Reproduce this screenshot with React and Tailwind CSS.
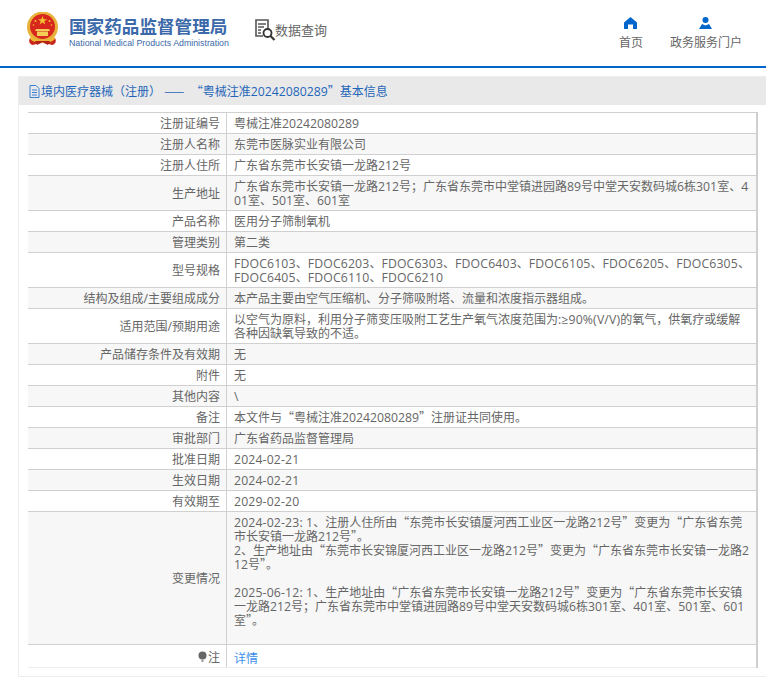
const cjk = { fontFamily: '"Noto Sans CJK SC", sans-serif' };

const rows = [
  { label: '注册证编号', value: ['粤械注准20242080289'] },
  { label: '注册人名称', value: ['东莞市医脉实业有限公司'] },
  { label: '注册人住所', value: ['广东省东莞市长安镇一龙路212号'] },
  { label: '生产地址', value: ['广东省东莞市长安镇一龙路212号；广东省东莞市中堂镇进园路89号中堂天安数码城6栋301室、4', '01室、501室、601室'] },
  { label: '产品名称', value: ['医用分子筛制氧机'] },
  { label: '管理类别', value: ['第二类'] },
  { label: '型号规格', value: ['FDOC6103、FDOC6203、FDOC6303、FDOC6403、FDOC6105、FDOC6205、FDOC6305、', 'FDOC6405、FDOC6110、FDOC6210'] },
  { label: '结构及组成/主要组成成分', value: ['本产品主要由空气压缩机、分子筛吸附塔、流量和浓度指示器组成。'] },
  { label: '适用范围/预期用途', value: ['以空气为原料，利用分子筛变压吸附工艺生产氧气浓度范围为:≥90%(V/V)的氧气，供氧疗或缓解', '各种因缺氧导致的不适。'] },
  { label: '产品储存条件及有效期', value: ['无'] },
  { label: '附件', value: ['无'] },
  { label: '其他内容', value: ['\\'] },
  { label: '备注', value: ['本文件与“粤械注准20242080289”注册证共同使用。'] },
  { label: '审批部门', value: ['广东省药品监督管理局'] },
  { label: '批准日期', value: ['2024-02-21'] },
  { label: '生效日期', value: ['2024-02-21'] },
  { label: '有效期至', value: ['2029-02-20'] },
  {
    label: '变更情况',
    value: [
      '2024-02-23: 1、注册人住所由“东莞市长安镇厦河西工业区一龙路212号”变更为“广东省东莞',
      '市长安镇一龙路212号”。',
      '2、生产地址由“东莞市长安锦厦河西工业区一龙路212号”变更为“广东省东莞市长安镇一龙路2',
      '12号”。',
      '\u00a0',
      '2025-06-12: 1、生产地址由“广东省东莞市长安镇一龙路212号”变更为“广东省东莞市长安镇',
      '一龙路212号；广东省东莞市中堂镇进园路89号中堂天安数码城6栋301室、401室、501室、601',
      '室”。',
      '\u00a0',
    ],
  },
];

// latin runs are set a little wider than the cjk around them
function Mixed({ text }) {
  return text.split(/([\x20-\x7e≥]+)/).map((part, i) => {
    if (i % 2 === 0) return part;
    const wide = /[A-Z-]/.test(part);
    return (
      <span key={i} className={`font-['Open_Sans'] text-[12.250px] leading-[0px] ${wide ? 'tracking-[0.150px]' : ''}`}>{part}</span>
    );
  });
}

function Emblem() {
  return (
    <svg width="33" height="35" viewBox="0 0 33 35" className="shrink-0">
      <path d="M4 26c-2 3 0 7 3 7 3-1 6-2 9.500-2s6.500 1 9.500 2c3 0 5-4 3-7z" fill="#c9281c" />
      <circle cx="16.500" cy="15" r="15.500" fill="#e8b23a" />
      <circle cx="16.500" cy="14.500" r="12.500" fill="#d8281d" />
      <path d="M16.500 4l1.200 3.300h3.400l-2.800 2 1 3.300-2.800-2-2.800 2 1-3.300-2.800-2h3.400z" fill="#f2c230" />
      <circle cx="9.500" cy="9" r="1" fill="#f2c230" />
      <circle cx="23.500" cy="9" r="1" fill="#f2c230" />
      <circle cx="7.500" cy="13" r="0.800" fill="#f2c230" />
      <circle cx="25.500" cy="13" r="0.800" fill="#f2c230" />
      <path d="M10 17h13l1 2H9zM11 19.500h11V24H11z" fill="#f4cd58" />
      <path d="M5 24c3 4 8 5 11.500 5S25 28 28 24l1 3c-3 3-8 4-12.500 4S7 30 4 27z" fill="#eeb936" />
      <path d="M9 29l2 4 5.500-3 5.500 3 2-4z" fill="#b51f17" />
    </svg>
  );
}

function SearchDoc() {
  return (
    <svg width="22" height="22" viewBox="0 0 22 22" fill="none" className="shrink-0">
      <path d="M9 17H2V1h12v8" stroke="#555" strokeWidth="1.600" />
      <path d="M4 5h8M4 8h6M4 11h3M4 14h3" stroke="#555" strokeWidth="1.300" />
      <circle cx="13.500" cy="14" r="4" stroke="#333" strokeWidth="1.800" />
      <path d="M16.500 17l4 4" stroke="#333" strokeWidth="2.200" />
    </svg>
  );
}

function HomeIcon() {
  return (
    <svg width="13" height="12" viewBox="0 0 13 12">
      <path d="M6.500 0L13 5.500V12H9V7.500H4V12H0V5.500z" fill="#0066cc" />
    </svg>
  );
}

function UserIcon() {
  return (
    <svg width="13" height="12" viewBox="0 0 13 12">
      <circle cx="6.500" cy="3" r="3" fill="#0066cc" />
      <path d="M3 7l3.500 1.500L10 7l3 5H0z" fill="#0066cc" />
    </svg>
  );
}

function InfoRow({ row, gray }) {
  return (
    <div className={`flex border-b border-[#d0d0d0] ${gray ? 'bg-[#f7f7f7]' : 'bg-white'}`}>
      <div className="flex w-[199px] shrink-0 items-center justify-end border-r border-[#d0d0d0] pr-[6px] text-[#666]">
        <span><Mixed text={row.label} /></span>
      </div>
      <div className="flex-1 py-[3px] pl-[7px] text-[#666]">
        {row.value.map((line, i) => (
          <div key={i} className="whitespace-nowrap"><Mixed text={line} /></div>
        ))}
      </div>
    </div>
  );
}

export default function App() {
  return (
    <div className="h-[683px] w-[766px] overflow-hidden bg-white text-[12px] leading-[14px]" style={cjk}>
      <header className="flex h-[66px] items-start justify-between pr-[24px]">
        <div className="flex items-start">
          <div className="mt-[12px] ml-[26px]"><Emblem /></div>
          <div className="mt-[15px] ml-[10px] w-[160px]">
            <div className="text-[17.600px] leading-[22px] font-bold whitespace-nowrap text-[#3b69a9]">国家药品监督管理局</div>
            <div className="text-[8.800px] leading-[12px] whitespace-nowrap text-[#3b69a9] font-['Liberation_Sans']">National Medical Products Administration</div>
          </div>
          <div className="mt-[19px] ml-[25px] flex items-center">
            <SearchDoc />
            <span className="-ml-[1px] text-[13px] leading-[20px] text-[#666]">数据查询</span>
          </div>
        </div>
        <nav className="flex gap-[27px] pt-[17px] text-[#666]">
          <a className="flex flex-col items-center">
            <HomeIcon />
            <span className="mt-[6px] leading-[14px]">首页</span>
          </a>
          <a className="flex flex-col items-center">
            <UserIcon />
            <span className="mt-[6px] leading-[14px]">政务服务门户</span>
          </a>
        </nav>
      </header>
      <div className="h-[2px] bg-[#0066cc]" />
      <div className="h-[4px] bg-[radial-gradient(#dddddd_0.6px,transparent_0.6px)] bg-[length:2px_2px]" />
      <div className="h-[4px]" />
      <main className="ml-[18px] w-[749px] border border-[#eeeeee]">
        <h1 className="flex h-[28px] items-center bg-[#e9e9ea] pl-[10px] text-[12px] font-normal whitespace-pre text-[#1f66b8]">
          <svg width="11" height="13" viewBox="0 0 11 13" fill="none" className="shrink-0">
            <path d="M1 .5h6l3 3v9H1zM3 5h5M3 7.500h5M3 10h5" stroke="#3b7fd0" />
          </svg>
          <span className="ml-[1px]"><Mixed text="境内医疗器械（注册） ——  “粤械注准20242080289”基本信息" /></span>
        </h1>
        <div className="mt-[7px] mr-[8px] mb-[8px] ml-[9px] border-t border-r-2 border-[#d0d0d0]">
          {rows.map((row, i) => (
            <InfoRow key={row.label} row={row} gray={i % 2 === 1} />
          ))}
          <div className="flex h-[23px] border-b border-[#eeeeee] bg-white">
            <div className="flex w-[199px] shrink-0 items-center justify-end border-r border-[#d0d0d0] pt-[1px] pr-[6px] text-[#666]">
              <svg width="9" height="12" viewBox="0 0 9 12" className="mr-[1px] shrink-0">
                <circle cx="4.500" cy="4.500" r="4" fill="#666" />
                <path d="M3.500 8.500h2V11h-2z" fill="#999" />
              </svg>
              注
            </div>
            <div className="flex-1 pt-[6px] pl-[7px] text-[#3d8fea]">详情</div>
          </div>
        </div>
      </main>
    </div>
  );
}
